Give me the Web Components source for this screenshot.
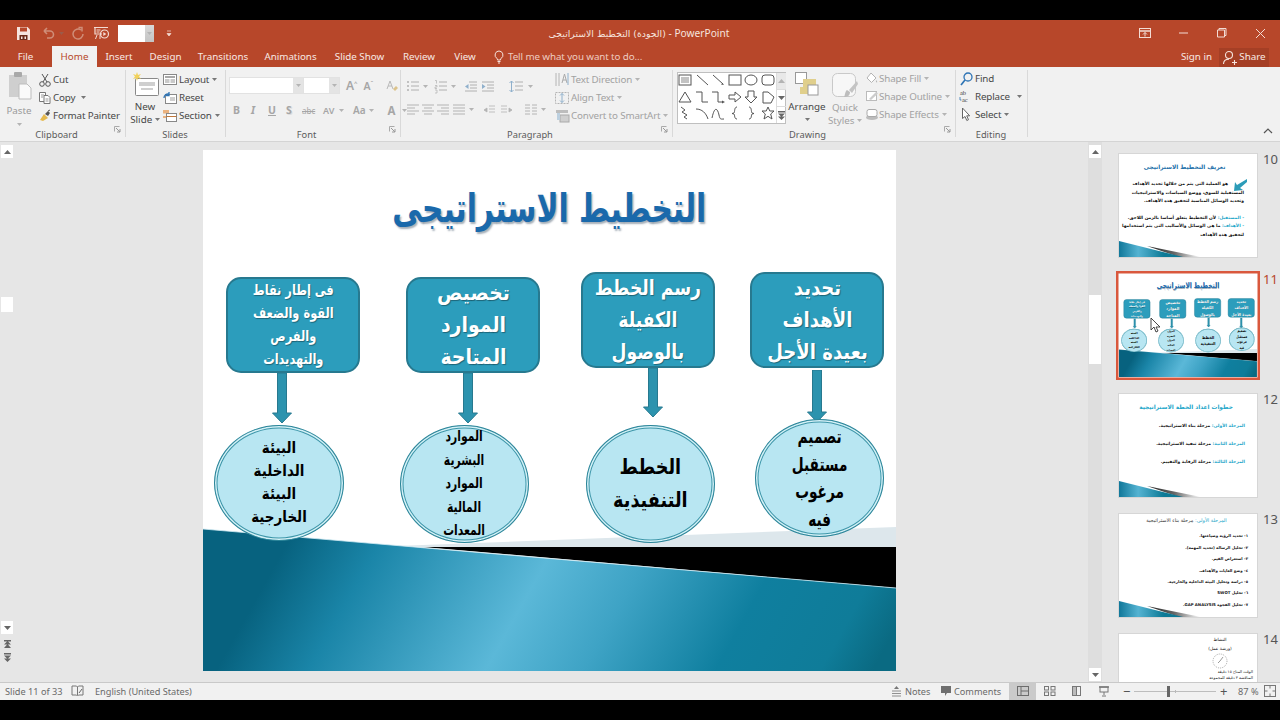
<!DOCTYPE html>
<html lang="en"><head><meta charset="utf-8"><title>PowerPoint</title>
<style>
html,body{margin:0;background:#000}
body{width:1280px;height:720px;padding:20px 0;box-sizing:border-box;display:flex;flex-direction:column;overflow:hidden;font-family:"Noto Sans","DejaVu Sans",sans-serif;font-size:10px;color:#444}
ppt-thumb p{margin:0;font:bold 4.4px/8.3px "DejaVu Sans",sans-serif;color:#111;text-align:right;white-space:nowrap}
ppt-thumb p.t{color:#1b6ea8;font-size:5.8px;text-align:center}
ppt-thumb b{color:#23a6c9}
</style></head><body>
<ppt-titlebar></ppt-titlebar>
<ppt-tabs></ppt-tabs>
<ppt-ribbon></ppt-ribbon>
<ppt-workspace>
  <ppt-thumb num="10" wedge>
    <div style="padding:9px 13px 0 6px" dir="rtl">
      <p class="t" style="margin-bottom:9px">تعريف التخطيط الاستراتيجى</p>
      <p style="padding-right:16px">هو العملية التى يتم من خلالها تحديد الأهداف</p>
      <p>المستقبلية للسوق، ووضع السياسات والاستراتيجيات</p>
      <p>وتحديد الوسائل المناسبة لتحقيق هذه الأهداف.</p>
      <p style="margin-top:9px"><b>- المستقبل:</b> لأن التخطيط يتعلق أساسا بالزمن اللاحق.</p>
      <p><b>- الأهداف:</b> ما هى الوسائل والأساليب التى يتم استخدامها</p>
      <p>لتحقيق هذه الأهداف</p>
    </div>
    <svg slot="over" width="14" height="14" viewBox="0 0 14 14" style="position:absolute;left:114px;top:24px"><path d="M14 1L4 7 2 4 1 13l9-1-3-2L14 4z" fill="#2c9cb8"/></svg>
  </ppt-thumb>
  <ppt-thumb num="11" active><ppt-slide class="mini"></ppt-slide>
    <svg slot="over" width="14" height="16" viewBox="0 0 14 16" style="position:absolute;left:31px;top:43px"><path d="M1 1v12l3-3 2 5 2-1-2-4h4z" fill="#fff" stroke="#333" stroke-width=".9"/></svg>
  </ppt-thumb>
  <ppt-thumb num="12" wedge>
    <div style="padding:9px 12px 0 8px" dir="rtl">
      <p class="t" style="color:#23a6c9;margin-bottom:11px">خطوات اعداد الخطة الاستراتيجية</p>
      <p style="margin:0 0 9.7px"><b>المرحلة الأولى:</b> مرحلة بناء الاستراتيجية.</p>
      <p style="margin:0 0 9.7px"><b>المرحلة الثانية:</b> مرحلة تنفيذ الاستراتيجية.</p>
      <p><b>المرحلة الثالثة:</b> مرحلة الرقابة والتقييم.</p>
    </div>
  </ppt-thumb>
  <ppt-thumb num="13" wedge>
    <div style="padding:2px 9px 0 6px" dir="rtl">
      <p class="t" style="color:#333;font-weight:normal;margin-bottom:6px;font-size:5px"><b style="font-weight:normal">المرحلة الأولى:</b> مرحلة بناء الاستراتيجية</p>
      <p style="line-height:11.4px;font-size:3.9px">١- تحديد الرؤية وصياغتها.</p>
      <p style="line-height:11.4px;font-size:3.9px">٢- تحليل الرسالة (تحديد المهمة).</p>
      <p style="line-height:11.4px;font-size:3.9px">٣- استعراض القيم.</p>
      <p style="line-height:11.4px;font-size:3.9px">٤- وضع الغايات والأهداف.</p>
      <p style="line-height:11.4px;font-size:3.9px">٥- دراسة وتحليل البيئة الداخلية والخارجية.</p>
      <p style="line-height:11.4px;font-size:3.9px">٦- تحليل SWOT</p>
      <p style="line-height:11.4px;font-size:3.9px">٧- تحليل الفجوة GAP ANALYSIS.</p>
    </div>
  </ppt-thumb>
  <ppt-thumb num="14">
    <div style="padding:1px 4px 0 68px" dir="rtl">
      <p style="text-align:center;font-weight:normal;line-height:9px">النشاط</p>
      <p style="text-align:center;font-weight:normal;line-height:9px">(ورشة عمل)</p>
      <div style="display:flex;justify-content:center"><svg width="16" height="16" viewBox="0 0 16 16"><circle cx="8" cy="8" r="7" fill="none" stroke="#888" stroke-width=".7" stroke-dasharray="1 1"/><path d="M8 8l3-4M8 8l-2 2" stroke="#555" stroke-width=".6"/></svg></div>
      <p style="font-weight:normal;line-height:6px;font-size:3.8px">الوقت المتاح ١٥ دقيقة</p>
      <p style="font-weight:normal;line-height:6px;font-size:3.8px">المناقشة ٣ دقيقة للمجموعة</p>
    </div>
  </ppt-thumb>
</ppt-workspace>
<ppt-status></ppt-status>
<script>
const UI='"Noto Sans","DejaVu Sans",sans-serif';
const ICONS={
 save:'<path d="M1 1h10.500L14 3.500V14H1z" fill="#f6e4de"/><rect x="4" y="1.500" width="7" height="4" fill="#b7472a"/><rect x="3.500" y="9" width="8" height="5" fill="#6b2a18"/><rect x="5" y="10.500" width="1.500" height="2.500" fill="#f6e4de"/><rect x="8.500" y="10.500" width="1.500" height="2.500" fill="#f6e4de"/>',
 undo:'<path d="M3 5h6a3.400 3.400 0 0 1 0 7H6M3 5l3-3M3 5l3 3" fill="none" stroke="#cf8d78" stroke-width="1.600"/>',
 redo:'<path d="M11 4a5 5 0 1 0 2 4M8.500 1.500h3.500v4" fill="none" stroke="#cf8d78" stroke-width="1.500"/>',
 present:'<path d="M1 1.500h14M2 2v6h7" fill="none" stroke="#f3dcd4" stroke-width="1.200"/><path d="M3.500 4h4M3.500 6h3M4 9l-1.500 4M7 9v4" stroke="#f3dcd4" stroke-width="1"/><circle cx="11.500" cy="8" r="4" fill="none" stroke="#f3dcd4" stroke-width="1.200"/><path d="M10.300 6v4l3-2z" fill="#f3dcd4"/>',
 qat:'<path d="M1 1h4M1 3.500h4L3 6z" fill="#f3dcd4" stroke="#f3dcd4" stroke-width=".7"/>',
 ribbonopt:'<rect x=".5" y="1.500" width="11" height="9" fill="none" stroke="#f3dcd4"/><path d="M.5 4h11" stroke="#f3dcd4" stroke-width="1.500"/><path d="M6 9.500V5.500M4 7.500l2-2 2 2" fill="none" stroke="#f3dcd4"/>',
 min:'<path d="M1 6h9" stroke="#f3dcd4"/>',
 max:'<path d="M1.500 3h7v7h-7zM3 3V1.500h7v7H8.500" fill="none" stroke="#f3dcd4"/>',
 close:'<path d="M1 1l9 9M10 1l-9 9" stroke="#f3dcd4"/>',
 bulb:'<path d="M6 1a4 4 0 0 0-2.200 7.300c.5.400.7 1 .7 1.700h3c0-.7.2-1.300.7-1.700A4 4 0 0 0 6 1zM4.500 11.500h3M5 13h2" fill="none" stroke="#f6e4de"/>',
 user:'<circle cx="7" cy="5" r="3.500" fill="none" stroke="#f6e4de" stroke-width="1.100"/><path d="M1.500 14c0-3 2-4.800 5.500-4.800M10 12.500h5M12.500 10v5" fill="none" stroke="#f6e4de" stroke-width="1.100"/>',
 paste:'<path d="M1 3h18v22H1z" fill="#cfcfcf"/><rect x="6" y="0" width="8" height="5" rx="1" fill="#a9a9a9"/><path d="M11 12h8l4 4v11H11z" fill="#fafafa" stroke="#bdbdbd"/>',
 cut:'<circle cx="3" cy="11" r="2.300" fill="none" stroke="#555"/><circle cx="9" cy="11" r="2.300" fill="none" stroke="#555"/><path d="M4 9L9 1M8 9L3 1" stroke="#555"/>',
 copy:'<path d="M.5 1.500h6v9h-6z" fill="#fff" stroke="#777"/><path d="M5 4.500h4l2 2v6H5z" fill="#fff" stroke="#777"/><path d="M2 4h3M2 6h2M6.500 8h3M6.500 10h3" stroke="#999"/>',
 painter:'<path d="M1 11l4-6 4 4-5 3z" fill="#e5b94d"/><path d="M6 5l3-3 2 2-2 3z" fill="#555"/><path d="M9 2l2-1" stroke="#555"/>',
 newslide:'<rect x="3.500" y="6.500" width="23" height="17" rx="1" fill="#fff" stroke="#888"/><rect x="7" y="10" width="16" height="4" fill="#cfcfcf"/><rect x="9" y="16" width="12" height="2" fill="#cfcfcf"/><path d="M5 0l1 3 3-1-2 2.500 2 2.500-3-1-1 3-1-3-3 1 2-2.500-2-2.500 3 1z" fill="#f2d25b"/>',
 layout:'<rect x=".5" y=".5" width="13" height="10" fill="#fff" stroke="#888"/><rect x="2" y="2" width="10" height="2" fill="#a8a8a8"/><rect x="2" y="5" width="4.500" height="4" fill="#c9c9c9"/><rect x="7.500" y="5" width="4.500" height="4" fill="#c9c9c9"/>',
 reset:'<rect x="2.500" y="2.500" width="11" height="9" fill="#fff" stroke="#888"/><rect x="7" y="5" width="5" height="4" fill="#cfcfcf"/><path d="M1 6a4 4 0 0 1 5-4M6 0v3.500H3" fill="none" stroke="#2e74b5" stroke-width="1.300"/>',
 section:'<rect x="0" y="0" width="6" height="3.500" fill="#eab27f"/><rect x="3.500" y="3.500" width="10" height="8" fill="#fff" stroke="#888"/><rect x="0" y="6" width="3" height="2" fill="#eab27f"/><path d="M3.500 6.500h10" stroke="#c0773b"/>',
 fontclear:'<path d="M3 10L6 2l3 8M4 7h4" fill="none" stroke="#b9b9b9"/><path d="M9 10l3-3 2 2-3 3z" fill="#dcc38c"/>',
 bullets:'<circle cx="2" cy="2" r="1" fill="#b0b0b0"/><circle cx="2" cy="6" r="1" fill="#b0b0b0"/><circle cx="2" cy="10" r="1" fill="#b0b0b0"/><path d="M5 2h8M5 6h8M5 10h8" stroke="#b0b0b0"/>',
 numbers:'<path d="M1 .5h1.500v3M1 5.500h2v1.500H1V8.500h2M1 10h2v3H1" fill="none" stroke="#b0b0b0" stroke-width=".7"/><path d="M5 2h8M5 6h8M5 10h8" stroke="#b0b0b0"/>',
 indentl:'<path d="M5 2h8M6 5h7M6 8h7M1 11h12" stroke="#b0b0b0"/><path d="M1 6.500L4.500 4v5z" fill="#8fb0cc"/>',
 indentr:'<path d="M1 2h12M6 5h7M6 8h7M1 11h12" stroke="#b0b0b0"/><path d="M4.500 6.500L1 4v5z" fill="#8fb0cc"/>',
 linesp:'<path d="M6 2h8M6 6h8M6 10h8" stroke="#b0b0b0"/><path d="M2.500 1v11M.5 3l2-2 2 2M.5 10l2 2 2-2" fill="none" stroke="#8fb0cc"/>',
 al:'<path d="M1 2h12M1 5h8M1 8h12M1 11h8" stroke="#b4b4b4" stroke-width="1.100"/>',
 ac:'<path d="M1 2h12M3 5h8M1 8h12M3 11h8" stroke="#b4b4b4" stroke-width="1.100"/>',
 ar:'<path d="M1 2h12M5 5h8M1 8h12M5 11h8" stroke="#b4b4b4" stroke-width="1.100"/>',
 aj:'<path d="M1 2h12M1 5h12M1 8h12M1 11h12" stroke="#b4b4b4" stroke-width="1.100"/>',
 ltr:'<path d="M6 2h6M6 5h6M6 8h6M1 6l3-2v4z" stroke="#b4b4b4" fill="#b4b4b4" stroke-width=".8"/>',
 rtl:'<path d="M1 2h6M1 5h6M1 8h6M12 6L9 4v4z" stroke="#b4b4b4" fill="#b4b4b4" stroke-width=".8"/>',
 cols:'<path d="M1 2h5M1 5h5M1 8h5M1 11h5M8 2h5M8 5h5M8 8h5M8 11h5" stroke="#b4b4b4"/>',
 textdir:'<path d="M1 1v13M4 1v13" stroke="#b4b4b4"/><path d="M7 11l2.500-9 2.500 9M8 8h3" fill="none" stroke="#a9a9a9"/><path d="M13 1v12" stroke="#8fb0cc"/>',
 aligntext:'<rect x=".5" y="1.500" width="13" height="11" fill="none" stroke="#b4b4b4" stroke-dasharray="2 1"/><path d="M7 2.500v9M5 4.500l2-2 2 2M5 9.500l2 2 2-2" fill="none" stroke="#8fb0cc"/>',
 smartart:'<path d="M1 1h12v3H1z" fill="#bdbdbd"/><rect x="5" y="6" width="9" height="7" fill="#cfcfcf" stroke="#aaa"/><rect x="2" y="4" width="3" height="7" fill="#bcd0e0"/>',
 arrange:'<rect x=".5" y=".5" width="11" height="11" fill="#fff" stroke="#999"/><rect x="8" y="7" width="13" height="9" fill="#e0cf8c"/><rect x="5" y="15" width="8" height="7" fill="#e0cf8c"/><rect x="13" y="13" width="10" height="10" fill="#fff" stroke="#999"/>',
 quick:'<rect x=".5" y=".5" width="23" height="23" rx="5" fill="#f7f7f7" stroke="#c9c9c9"/><path d="M25 8L17 17l3 3 6-9z" fill="#c4c4c4"/><path d="M12 24c4 0 6-2 6-5l-3-2c-2 1-2 6-3 7z" fill="#bdbdbd"/>',
 fill:'<path d="M5 1l5 5-4.500 4.500L1 6z" fill="#fff" stroke="#b4b4b4"/><path d="M10 8c1 1 1.500 2 1 2.500S9.500 9.500 10 8z" fill="#b4b4b4"/>',
 outline:'<rect x=".5" y="1.500" width="10" height="9" fill="#fff" stroke="#bbb"/><path d="M3 9l7-7 2 1.500L5 10z" fill="#ccc"/>',
 effects:'<ellipse cx="7" cy="9.500" rx="6" ry="2.500" fill="#bcbcbc"/><rect x="2" y="1.500" width="10" height="7" rx="2" fill="#fff" stroke="#aaa"/>',
 find:'<circle cx="8" cy="5" r="4" fill="none" stroke="#2e74b5" stroke-width="1.300"/><path d="M5 8l-4 5" stroke="#2e74b5" stroke-width="1.700"/>',
 select:'<path d="M1.500 1v10.500l2.500-2 1.800 4 1.700-.8-1.800-3.900h3z" fill="#fff" stroke="#666"/>',
 launcher:'<path d="M.5 .5h5M.5 .5v5" stroke="#aaa" fill="none"/><path d="M2 2l4 4M6 3v3H3" stroke="#999" fill="none"/>',
 book:'<path d="M1 1h4.500l1 1 1-1H12v9H7.500l-1 1-1-1H1z" fill="none" stroke="#777"/><path d="M6.500 2v8" stroke="#777"/><path d="M8 8l3-4" stroke="#666"/>',
 notes:'<path d="M1 11h9M1 8.500h9M1 6h9" stroke="#777" stroke-width=".8"/><path d="M5.500 1L3 4h5z" fill="#777"/>',
 comment:'<path d="M0 0h10v7H6l-2 3V7H0z" fill="#6e6e6e"/>',
 normal:'<rect x=".5" y=".5" width="11" height="9" fill="none" stroke="#6c6c6c"/><path d="M4 .5v9M4 5h7.500" stroke="#6c6c6c"/>',
 sorter:'<rect x=".5" y=".5" width="4" height="3.500" fill="none" stroke="#777"/><rect x="7" y=".5" width="4" height="3.500" fill="none" stroke="#777"/><rect x=".5" y="6" width="4" height="3.500" fill="none" stroke="#777"/><rect x="7" y="6" width="4" height="3.500" fill="none" stroke="#777"/>',
 reading:'<rect x=".5" y=".5" width="4" height="9" fill="#bbb" stroke="#777"/><rect x="4.500" y=".5" width="4" height="9" fill="none" stroke="#777"/>',
 show:'<path d="M0 1h10" stroke="#777" stroke-width="1.500"/><rect x="1" y="1" width="8" height="5" fill="none" stroke="#777"/><path d="M5 6v3M3 10h4" stroke="#777"/>',
 fit:'<rect x=".5" y=".5" width="11" height="11" fill="none" stroke="#777"/><path d="M6 .5v3M6 8.500v3M.5 6h3M8.500 6h3" stroke="#777"/>',
 up:'<path d="M4.500 1L8 5H1z" fill="#666"/>',
 down:'<path d="M4.500 5L1 1h7z" fill="#666"/>',
 dup:'<path d="M1 0h7v1.500H1zM4.500 1L8 4.500H1zM4.500 4L8 8H1z" fill="#666"/>',
 ddown:'<path d="M1 0h7v1.500H1zM4.500 6L1 2.500h7zM4.500 9L1 5.500h7z" fill="#666"/>',
 caret:'<path d="M0 0h5L2.500 3z" fill="#777"/>',
 caretg:'<path d="M0 0h5L2.500 3z" fill="#b4b4b4"/>',
 collapse:'<path d="M1 5l4-4 4 4" fill="none" stroke="#555" stroke-width="1.200"/>',
 s1:'<rect x="1" y="2" width="12" height="10" fill="none" stroke="#555"/><path d="M3 5h8M3 7h8M3 9h8" stroke="#555" stroke-width=".7"/>',
 s2:'<path d="M2 2l11 10" stroke="#555"/>',
 s3:'<path d="M2 2l10 9" stroke="#555"/><path d="M13 12l-3-.5 1.500-1.500z" fill="#555"/>',
 s4:'<rect x="1" y="2" width="12" height="10" fill="none" stroke="#555"/>',
 s5:'<ellipse cx="7" cy="7" rx="6" ry="5" fill="none" stroke="#555"/>',
 s6:'<rect x="1" y="2" width="12" height="10" rx="3" fill="none" stroke="#555"/>',
 s7:'<path d="M7 2l6 10H1z" fill="none" stroke="#555"/>',
 s8:'<path d="M1 2h6v10h6" fill="none" stroke="#555"/>',
 s9:'<path d="M1 2h6v10h5" fill="none" stroke="#555"/><path d="M14 12l-3 1.500v-3z" fill="#555"/>',
 s10:'<path d="M1 5h6V2l6 5-6 5V9H1z" fill="none" stroke="#555"/>',
 s11:'<path d="M4 1h6v6h3l-6 6-6-6h3z" fill="none" stroke="#555"/>',
 s12:'<path d="M2 2h5l6 5-3 6H2z" fill="none" stroke="#555"/>',
 s13:'<path d="M3 1l4 3-3 2 5 3-3 2 3 2" fill="none" stroke="#555"/>',
 s14:'<path d="M1 3c6 0 10 4 12 10" fill="none" stroke="#555"/>',
 s15:'<path d="M1 12c3-14 6-8 7-3s2 4 5 4" fill="none" stroke="#555"/>',
 s16:'<path d="M9 1C6 1 7 6 6 7L4 7.500 6 8c1 1 0 5 3 5" fill="none" stroke="#555"/>',
 s17:'<path d="M5 1c3 0 2 5 3 6l2 .5L8 8c-1 1 0 5-3 5" fill="none" stroke="#555"/>',
 s18:'<path d="M7 1l1.800 4H13l-3.300 3 1.300 5-4-2.700L3 13l1.300-5L1 5h4.200z" fill="none" stroke="#555"/>'
};
class PptIcon extends HTMLElement{
 connectedCallback(){
  const w=this.getAttribute('w')||14,h=this.getAttribute('h')||14;
  const r=this.shadowRoot||this.attachShadow({mode:'open'});
  r.innerHTML=`<style>:host{display:inline-flex;flex:none;width:${w}px;height:${h}px}svg{display:block;overflow:visible}</style><svg width="${w}" height="${h}" viewBox="0 0 ${w} ${h}">${ICONS[this.getAttribute('name')]||''}</svg>`;
 }
}
customElements.define('ppt-icon',PptIcon);
const ic=(n,w,h,s='')=>`<ppt-icon name="${n}" w="${w}" h="${h}" style="${s}"></ppt-icon>`;

class PptTitlebar extends HTMLElement{
 constructor(){super();this.attachShadow({mode:'open'}).innerHTML=`<style>
 :host{display:flex;align-items:center;height:26px;background:#b7472a;position:relative;flex:none;color:#f6e4de;font:10.2px ${UI}}
 .box{display:flex;width:36px;height:17px;margin-left:8px;background:#fff}.box i{margin-left:auto;width:9px;background:linear-gradient(#d8d8d8,#c4c4c4);display:flex;align-items:center;justify-content:center}
 .title{flex:1;text-align:center;padding-right:2px;white-space:nowrap;overflow:hidden}
 bdi{font-family:"DejaVu Sans",sans-serif;font-size:9.300px}
 .q{display:flex;align-items:center;width:184px;padding-left:16px;flex:none;box-sizing:border-box}
 .w{display:flex;align-items:center;flex:none}
 </style>
 <div class="q">${ic('save',15,15)}${ic('undo',15,14,'margin-left:10px')}${ic('caret',5,3,'margin-left:3px;opacity:.4')}${ic('redo',14,14,'margin-left:6px')}${ic('present',16,15,'margin-left:9px')}<div class="box" style="margin-left:9px"><i>${ic('caretg',5,3)}</i></div>${ic('qat',6,6,'margin-left:12px')}</div>
 <div class="title"><bdi dir="rtl">(الجودة) التخطيط الاستراتيجى</bdi> - PowerPoint</div>
 <div class="w" style="width:184px;padding-right:14px;box-sizing:border-box;justify-content:flex-end">${ic('ribbonopt',12,12)}${ic('min',11,12,'margin-left:27px')}${ic('max',11,12,'margin-left:27px')}${ic('close',11,11,'margin-left:28px')}</div>`;}
}
customElements.define('ppt-titlebar',PptTitlebar);

class PptTabs extends HTMLElement{
 constructor(){super();
 const t=[['File',51],['Home',45,'a'],['Insert',44],['Design',49],['Transitions',66],['Animations',69],['Slide Show',69],['Review',50],['View',42]];
 this.attachShadow({mode:'open'}).innerHTML=`<style>
 :host{display:flex;align-items:stretch;height:21px;background:#b7472a;flex:none;color:#f8e9e4;font:9.800px/22px ${UI}}
 .c{white-space:nowrap;text-align:center;flex:none}
 .a{background:#f1f1f1;color:#b7472a;margin-left:1px}
 .tell{display:flex;align-items:center;margin-left:7px;color:#eeccc0;gap:3px;white-space:nowrap;letter-spacing:-.1px}
 .r{margin-left:auto;display:flex;align-items:center;padding-right:11px;white-space:nowrap}
 .sh{display:flex;align-items:center;gap:2px;background:#a53f25;height:19px;width:50px;justify-content:center;margin-left:7px;margin-top:1px}
 </style>
 ${t.map(([n,w,k])=>`<span class="c ${k||''}" style="width:${w}px">${n}</span>`).join('')}
 <div class="tell">${ic('bulb',12,14)}<span>Tell me what you want to do...</span></div>
 <div class="r"><span>Sign in</span><div class="sh">${ic('user',15,15)}<span>Share</span></div></div>`;}
}
customElements.define('ppt-tabs',PptTabs);

class RItem extends HTMLElement{
 connectedCallback(){
  const a=n=>this.getAttribute(n);const dis=this.hasAttribute('dis');
  const r=this.shadowRoot||this.attachShadow({mode:'open'});
  r.innerHTML=`<style>:host{display:flex;align-items:center;height:18.400px;white-space:nowrap;color:${dis?'#a2a2a2':'#484848'};font:9.800px ${UI};letter-spacing:-.15px}
  .i{width:${a('iw')||14}px;display:flex;justify-content:center;margin-right:${a('gap')||2}px;flex:none}</style>
  <div class="i"><slot></slot></div><span>${a('label')}</span>${a('caret')!==null?ic(dis?'caretg':'caret',5,3,'margin-left:'+(a('caret')||4)+'px'):''}`;
 }
}
customElements.define('r-item',RItem);

class RGroup extends HTMLElement{
 constructor(){super();this.attachShadow({mode:'open'}).innerHTML=`<style>
 :host{display:flex;flex-direction:column;flex:none;position:relative;box-sizing:border-box}
 :host::after{content:"";position:absolute;right:-1px;top:3px;bottom:4px;width:1px;background:#d9d9d9}
 .b{height:62px;display:flex;padding-top:3px;box-sizing:border-box}
 .l{height:12px;font:9.300px/12px ${UI};color:#5b5b5b;text-align:center}
 .k{position:absolute;right:5px;bottom:6px;display:none}
 :host([k]) .k{display:block}:host([k]) .l{padding-right:12px}
 </style><div class="b"><slot></slot></div><div class="l"></div><div class="k">${ic('launcher',6,6)}</div>`;}
 connectedCallback(){this.shadowRoot.querySelector('.l').textContent=this.getAttribute('label');this.style.width=this.getAttribute('w')+'px';}
}
customElements.define('r-group',RGroup);

class PptRibbon extends HTMLElement{
 constructor(){super();
 const shapes=[];for(let i=1;i<=18;i++)shapes.push(ic('s'+i,16.5,17,''));
 this.attachShadow({mode:'open'}).innerHTML=`<style>
 :host{display:flex;height:74px;background:#f1f1f1;flex:none;position:relative;box-shadow:0 1px 0 #d4d4d4;font:9.800px ${UI};color:#484848}
 .col{display:flex;flex-direction:column}
 .big{display:flex;flex-direction:column;align-items:center;text-align:center;flex:none;line-height:13px}
 .row{display:flex;align-items:center}
 .fbox{height:17px;background:#fff;border:1px solid #e2e2e2;box-sizing:border-box;display:flex;justify-content:flex-end}
 .fbox i{width:10px;background:#e4e4e4;display:flex;align-items:center;justify-content:center}
 .ft{color:#a6a6a6;font-weight:600}
 .gal{width:109px;height:52px;background:#fff;border:1px solid #bfbfbf;box-sizing:border-box;display:flex;margin-top:2px;margin-left:5px}
 .sg{display:grid;grid-template-columns:repeat(6,16.500px);grid-auto-rows:16.600px;width:98px}
 .sc{width:10px;display:flex;flex-direction:column;border-left:1px solid #dcdcdc}
 .sc div{flex:1;display:flex;align-items:center;justify-content:center;border-bottom:1px solid #dcdcdc}
 .collapse{position:absolute;right:7px;bottom:4px}
 </style>
 <r-group label="Clipboard" w="125" k>
   <div class="big" style="width:38px;color:#9a9a9a">${ic('paste',23,27,'margin-top:2px')}<div style="margin-top:5px">Paste</div>${ic('caretg',5,3,'margin-top:6px')}</div>
   <div class="col">
     <r-item label="Cut" iw="13"><ppt-icon name="cut" w="12" h="13"></ppt-icon></r-item>
     <r-item label="Copy" iw="13" caret="6"><ppt-icon name="copy" w="12" h="13"></ppt-icon></r-item>
     <r-item label="Format Painter" iw="13"><ppt-icon name="painter" w="12" h="13"></ppt-icon></r-item>
   </div>
 </r-group>
 <r-group label="Slides" w="100">
   <div class="big" style="width:40px">${ic('newslide',27,24,'margin-top:2px')}<div style="margin-top:4px">New</div><div style="white-space:nowrap">Slide ${ic('caret',5,3,'vertical-align:2px')}</div></div>
   <div class="col" style="margin-left:-2px">
     <r-item label="Layout" caret="3"><ppt-icon name="layout" w="14" h="11"></ppt-icon></r-item>
     <r-item label="Reset"><ppt-icon name="reset" w="14" h="12"></ppt-icon></r-item>
     <r-item label="Section" caret="3"><ppt-icon name="section" w="14" h="12"></ppt-icon></r-item>
   </div>
 </r-group>
 <r-group label="Font" w="175" k>
   <div class="col" style="padding-left:4px">
     <div class="row" style="margin-top:7px;height:17px">
       <div class="fbox" style="width:75px"><i>${ic('caretg',5,3)}</i></div><div class="fbox" style="width:36px;border-left:0"><i>${ic('caretg',5,3)}</i></div>
       <span class="ft" style="font-size:12px;margin-left:6px">A</span><sup class="ft" style="font-size:6px;margin-top:-6px">^</sup><span class="ft" style="font-size:10.500px;margin-left:6px">A</span><sup class="ft" style="font-size:6px;margin-top:-6px">ˇ</sup>
       ${ic('fontclear',14,13,'margin-left:11px')}
     </div>
     <div class="row ft" style="margin-top:8px;height:16px;font-size:10.500px;padding-left:4px">
       <span style="font-weight:700;width:18px">B</span><span style="font-style:italic;font-weight:700;width:17px">I</span><span style="text-decoration:underline;font-weight:700;width:18px">U</span><span style="font-weight:700;width:14px;text-shadow:1px 1px 0 #ddd">S</span><span style="font-size:8px;width:21px;text-decoration:line-through;font-weight:400;margin-left:2px">abc</span><span style="font-size:9px;width:13px">AV</span>${ic('caretg',5,3,'margin:0 9px 0 3px')}<span style="font-size:10px">Aa</span>${ic('caretg',5,3,'margin:0 14px 0 3px')}<span style="font-size:11.500px;font-weight:700">A</span>${ic('caretg',5,3,'margin-left:6px')}
     </div>
   </div>
 </r-group>
 <r-group label="Paragraph" w="272" k>
   <div class="col" style="padding-left:6px;width:148px;flex:none">
     <div class="row" style="margin-top:9px;height:14px">${ic('bullets',14,12)}${ic('caretg',5,3,'margin:0 6px 0 3px')}${ic('numbers',14,13)}${ic('caretg',5,3,'margin:0 8px 0 3px')}${ic('indentl',14,12)}${ic('indentr',14,12,'margin-left:3px')}${ic('linesp',15,13,'margin-left:14px')}${ic('caretg',5,3,'margin-left:4px')}</div>
     <div class="row" style="margin-top:9px;height:14px">${ic('al',14,13)}${ic('ac',14,13,'margin-left:1px')}${ic('ar',14,13,'margin-left:1px')}${ic('aj',14,13,'margin-left:2px')}${ic('caretg',5,3,'margin:0 9px 0 3px')}${ic('ltr',13,10)}${ic('rtl',13,10,'margin-left:4px')}${ic('cols',14,13,'margin-left:11px')}${ic('caretg',5,3,'margin-left:3px')}</div>
   </div>
   <div class="col" style="margin-left:1px">
     <r-item dis label="Text Direction" caret="3"><ppt-icon name="textdir" w="14" h="15"></ppt-icon></r-item>
     <r-item dis label="Align Text" caret="3"><ppt-icon name="aligntext" w="14" h="14"></ppt-icon></r-item>
     <r-item dis label="Convert to SmartArt" caret="3"><ppt-icon name="smartart" w="14" h="14"></ppt-icon></r-item>
   </div>
 </r-group>
 <r-group label="Drawing" w="283" k>
   <div class="gal"><div class="sg">${shapes.join('')}</div><div class="sc"><div style="background:#e8e8e8">${ic('up',9,6,'opacity:.4')}</div><div>${ic('down',9,6)}</div><div style="border:0">${ic('ddown',9,9)}</div></div></div>
   <div class="big" style="width:42px">${ic('arrange',24,24,'margin-top:2px')}<div style="margin-top:4px">Arrange</div>${ic('caret',5,3,'margin-top:5px')}</div>
   <div class="big" style="width:34px;color:#a2a2a2">${ic('quick',26,24,'margin-top:3px')}<div style="margin-top:4px">Quick</div><div style="white-space:nowrap">Styles ${ic('caretg',5,3,'vertical-align:2px')}</div></div>
   <div class="col" style="margin-left:4px;margin-top:-1px">
     <r-item dis style="height:18px" iw="12" gap="1" label="Shape Fill" caret="3"><ppt-icon name="fill" w="12" h="12"></ppt-icon></r-item>
     <r-item dis style="height:18px" iw="12" gap="1" label="Shape Outline" caret="3"><ppt-icon name="outline" w="12" h="12"></ppt-icon></r-item>
     <r-item dis style="height:18px" iw="12" gap="1" label="Shape Effects" caret="3"><ppt-icon name="effects" w="14" h="13"></ppt-icon></r-item>
   </div>
 </r-group>
 <r-group label="Editing" w="72">
   <div class="col" style="padding-left:4px;margin-top:-1px">
     <r-item style="height:18px" label="Find"><ppt-icon name="find" w="13" h="13"></ppt-icon></r-item>
     <r-item style="height:18px" label="Replace" caret="7"><svg width="14" height="14" viewBox="0 0 14 14"><text x="1" y="6" font-size="6.500" font-family="Liberation Serif" fill="#444">ab</text><text x="3" y="13" font-size="6.500" font-family="Liberation Serif" fill="#444">ac</text><path d="M1 8v3h1.500" stroke="#2e74b5" fill="none" stroke-width=".8"/></svg></r-item>
     <r-item style="height:18px" label="Select" caret="3"><ppt-icon name="select" w="11" h="14"></ppt-icon></r-item>
   </div>
 </r-group>
 <div class="collapse">${ic('collapse',10,6)}</div>`;}
}
customElements.define('ppt-ribbon',PptRibbon);

class SlideNode extends HTMLElement{
 constructor(){super();this.attachShadow({mode:'open'}).innerHTML=`<style>
 :host{position:absolute;box-sizing:border-box;display:flex;align-items:center;justify-content:center;text-align:center;direction:rtl;font-family:"DejaVu Sans",sans-serif;font-weight:bold;white-space:pre-line}
 :host([kind=box]){background:#2c9dbc;border:2px solid #27798f;border-radius:15px;color:#fff;text-shadow:1px 1px 1px rgba(0,0,0,.35)}
 :host([kind=ell]){background:#b8e6f2;border-radius:50%;border:1.500px solid #2a8498;box-shadow:inset 0 0 0 1.500px #d4f1f7,inset 0 0 0 2.500px #3d96a9;color:#000}
 div{flex:none;white-space:pre}
 </style><div><slot></slot></div>`;}
 connectedCallback(){const [x,y,w,h,fs,lh,sx]=this.getAttribute('g').split(',');Object.assign(this.style,{left:x+'px',top:y+'px',width:w+'px',height:h+'px',fontSize:fs+'px',lineHeight:lh+'px'});this.shadowRoot.querySelector('div').style.transform=`scaleX(${sx})`;}
}
customElements.define('slide-node',SlideNode);
class SlideArrow extends HTMLElement{
 connectedCallback(){const [x,y,h]=this.getAttribute('g').split(',').map(Number);
  const r=this.shadowRoot||this.attachShadow({mode:'open'});
  r.innerHTML=`<style>:host{position:absolute;left:${x-10}px;top:${y}px;width:20px;height:${h}px}svg{display:block}</style><svg width="20" height="${h}" viewBox="0 0 20 ${h}"><path d="M5.500 0h9v${h-10}h5L10 ${h}L.5 ${h-10}h5z" fill="#2c93ae" stroke="#27798f"/></svg>`;}
}
customElements.define('slide-arrow',SlideArrow);

let gid=0;
class PptSlide extends HTMLElement{
 constructor(){super();const id='g'+(++gid);this.attachShadow({mode:'open'}).innerHTML=`<style>
 :host{display:block;position:relative;width:693px;height:521px;background:#fff;overflow:hidden;flex:none}
 svg.bg{position:absolute;left:0;top:0}
 .ti{position:absolute;left:0;right:0;top:28px;text-align:center;direction:rtl;font:bold 40px/60px "DejaVu Sans",sans-serif;color:#1a69ab;text-shadow:2px 2px 2px rgba(60,80,100,.45)}
 .ti span{display:inline-block;transform:scaleX(.74)}
 </style>
 <svg class="bg" width="693" height="521" viewBox="0 0 693 521">
  <defs><linearGradient id="${id}" gradientUnits="userSpaceOnUse" x1="170" y1="240" x2="670" y2="520">
   <stop offset="0" stop-color="#07627f"/><stop offset=".14" stop-color="#1a85a8"/><stop offset=".41" stop-color="#5bb8d8"/><stop offset=".56" stop-color="#3ea3c5"/><stop offset=".76" stop-color="#0f7f9f"/><stop offset=".92" stop-color="#0f7c99"/><stop offset="1" stop-color="#0a6a82"/></linearGradient></defs>
  <polygon points="193,396 693,377 693,397 220,397" fill="#dde7ec"/>
  <polygon points="220,397 693,397 693,438" fill="#000"/>
  <polygon points="0,379 693,438 693,521 0,521" fill="url(#${id})"/>
  <polyline points="0,379 693,438" fill="none" stroke="#cfeaf2" stroke-width=".8"/>
 </svg>
 <div class="ti"><span>التخطيط الاستراتيجى</span></div>
 <slide-node kind="box" g="547,122,134,96,21,32,.86">تحديد
الأهداف
بعيدة الأجل</slide-node>
 <slide-node kind="box" g="378,122,134,96,21,32,.82">رسم الخطط
الكفيلة
بالوصول</slide-node>
 <slide-node kind="box" g="203,127,134,96,21,32,.9">تخصيص
الموارد
المتاحة</slide-node>
 <slide-node kind="box" g="23,127,134,96,15,23,.76">فى إطار نقاط
القوة والضعف
والفرص
والتهديدات</slide-node>
 <slide-arrow g="79,223,50"></slide-arrow><slide-arrow g="265,223,50"></slide-arrow><slide-arrow g="450,218,49"></slide-arrow><slide-arrow g="614,220,52"></slide-arrow>
 <slide-node kind="ell" g="11,275,130,116,15.500,23,.87">البيئة
الداخلية
البيئة
الخارجية</slide-node>
 <slide-node kind="ell" g="197,275,129,118,15,23.500,.72">الموارد
البشرية
الموارد
المالية
المعدات</slide-node>
 <slide-node kind="ell" g="383,275,129,118,21,33,.84">الخطط
التنفيذية</slide-node>
 <slide-node kind="ell" g="552,269,129,118,19,27.500,.72">تصميم
مستقبل
مرغوب
فيه</slide-node>`;}
}
customElements.define('ppt-slide',PptSlide);

class PptThumb extends HTMLElement{
 constructor(){super();const id='t'+(++gid);this.attachShadow({mode:'open'}).innerHTML=`<style>
 :host{display:flex;flex:none;height:103px;margin-bottom:17px;position:relative}
 .f{position:relative;width:138px;height:103px;background:#fff;overflow:hidden;box-shadow:0 0 0 1px #d6d6d6;flex:none}
 :host([active]) .f{box-shadow:0 0 0 .5px #fff,0 0 0 3px #d9583d}
 .n{font:13px/14px ${UI};color:#555;margin:-2px 0 0 6px}
 :host([active]) .n{color:#b7472a}
 svg.w{position:absolute;left:0;bottom:0;display:none}
 :host([wedge]) svg.w{display:block}
 ::slotted(ppt-slide){transform:scale(.1991);transform-origin:0 0}
 </style><div class="f"><svg class="w" width="138" height="18" viewBox="0 0 138 18"><defs><linearGradient id="${id}a" x1="0" x2="1"><stop offset="0" stop-color="#11789a"/><stop offset=".3" stop-color="#54b3d2"/><stop offset=".7" stop-color="#0d7995"/></linearGradient><linearGradient id="${id}b" x1="0" x2="1"><stop offset="0" stop-color="#222"/><stop offset=".5" stop-color="#666"/><stop offset="1" stop-color="#fff"/></linearGradient></defs><polygon points="28,7 82,18 60,18" fill="url(#${id}b)"/><polygon points="0,2 64,18 0,18" fill="url(#${id}a)"/></svg><slot></slot><slot name="over"></slot></div><div class="n"></div>`;}
 connectedCallback(){this.shadowRoot.querySelector('.n').textContent=this.getAttribute('num');}
}
customElements.define('ppt-thumb',PptThumb);

class PptScroll extends HTMLElement{
 constructor(){super();this.attachShadow({mode:'open'}).innerHTML=`<style>
 :host{display:flex;flex-direction:column;align-items:center;flex:none;width:14px;background:#e6e6e6;box-sizing:border-box}
 .b{width:12px;height:13px;background:#fff;display:flex;align-items:center;justify-content:center;flex:none}
 .t{background:#fff;width:12px;flex:none}
 .sp{flex:1}
 :host([wide]){background:#dedede}
 </style><div class="b" style="margin-top:4px">${ic('up',9,6)}</div><div class="t"></div><div class="sp"></div><div class="b">${ic('down',9,6)}</div><slot></slot>`;}
 connectedCallback(){const t=this.shadowRoot.querySelector('.t');const [o,h]=this.getAttribute('thumb').split(',');t.style.marginTop=o+'px';t.style.height=h+'px';}
}
customElements.define('ppt-scroll',PptScroll);

class PptWorkspace extends HTMLElement{
 constructor(){super();this.attachShadow({mode:'open'}).innerHTML=`<style>
 :host{display:flex;flex:1;min-height:0;background:#e6e6e6;overflow:hidden}
 .cv{width:1074px;flex:none;padding:9px 0 0 189px;box-sizing:border-box}
 .th{flex:1;padding:13px 0 0 17px;overflow:hidden;display:flex;flex-direction:column}
 </style>
 <ppt-scroll thumb="139,15">
   <div style="height:48px;box-sizing:border-box;padding-top:6px;display:flex;flex-direction:column;gap:5px;align-items:center">${ic('dup',9,8)}${ic('ddown',9,9)}</div>
 </ppt-scroll>
 <div class="cv"><ppt-slide></ppt-slide></div>
 <ppt-scroll wide thumb="137,69" style="padding-bottom:1px"></ppt-scroll>
 <div class="th"><slot></slot></div>`;}
}
customElements.define('ppt-workspace',PptWorkspace);

class PptStatus extends HTMLElement{
 constructor(){super();this.attachShadow({mode:'open'}).innerHTML=`<style>
 :host{display:flex;align-items:center;height:18px;background:#f1f1f1;box-shadow:inset 0 1px 0 #c9c9c9;flex:none;font:9.200px ${UI};color:#6a6a6a;white-space:nowrap}
 .v{height:18px;display:flex;align-items:center;justify-content:center;width:27px;flex:none}
 .sl{width:82px;height:1px;background:#bdbdbd;position:relative;margin:0 3px}
 .sl i{position:absolute;left:33px;top:-5px;width:3px;height:11px;background:#666}
 .sl u{position:absolute;left:41px;top:-1px;width:1px;height:3px;background:#bbb}
 </style>
 <span style="margin-left:5px;width:66px">Slide 11 of 33</span>${ic('book',13,12)}<span style="margin-left:11px">English (United States)</span>
 <div style="flex:1"></div>
 ${ic('notes',11,12)}<span style="margin-left:3px;width:24px">Notes</span>${ic('comment',10,10,'margin-left:12px')}<span style="margin-left:3px;width:44px">Comments</span>
 <div class="v" style="margin-left:11px;background:#cacaca">${ic('normal',12,10)}</div><div class="v">${ic('sorter',12,10)}</div><div class="v">${ic('reading',9,10)}</div><div class="v">${ic('show',10,11)}</div>
 <span style="margin-left:6px;font-size:13px;color:#555;width:8px">−</span><div class="sl"><i></i><u></u></div><span style="font-size:13px;color:#555;width:10px;margin-left:1px">+</span>
 <span style="margin-left:8px;width:26px">87 %</span>${ic('fit',12,12,'margin-right:4px')}`;}
}
customElements.define('ppt-status',PptStatus);
</script>
</body></html>
